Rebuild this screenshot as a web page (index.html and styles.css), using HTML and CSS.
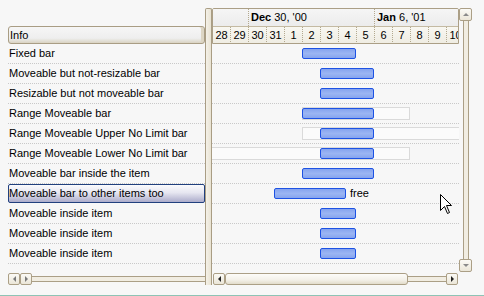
FILE: index.html
```html
<!DOCTYPE html>
<html lang="en">
<head>
<meta charset="utf-8">
<title>Gantt bars</title>
<link rel="stylesheet" href="styles.css">
</head>
<body>
<div class="frame">
  <div class="items">
    <div class="items-top"></div>
    <div class="items-head">Info</div>
    <div class="item">Fixed bar</div>
    <div class="item">Moveable but not-resizable bar</div>
    <div class="item">Resizable but not moveable bar</div>
    <div class="item">Range Moveable bar</div>
    <div class="item">Range Moveable Upper No Limit bar</div>
    <div class="item">Range Moveable Lower No Limit bar</div>
    <div class="item">Moveable bar inside the item</div>
    <div class="item selected">Moveable bar to other items too</div>
    <div class="item">Moveable inside item</div>
    <div class="item">Moveable inside item</div>
    <div class="item">Moveable inside item</div>
    <div class="hscroll">
      <span class="sbtn"><i class="arr arr-left dim"></i></span>
      <span class="sbtn"><i class="arr arr-right dim"></i></span>
      <span class="track"></span>
    </div>
  </div>

  <div class="splitter"></div>

  <div class="chart">
    <div class="chart-head">
      <div class="weeks">
        <div class="week lead"></div>
        <div class="week"><b>Dec</b> 30, '00</div>
        <div class="week"><b>Jan</b> 6, '01</div>
      </div>
      <div class="days">
        <div class="day">28</div><div class="day">29</div><div class="day">30</div><div class="day">31</div>
        <div class="day">1</div><div class="day">2</div><div class="day">3</div><div class="day">4</div>
        <div class="day">5</div><div class="day">6</div><div class="day">7</div><div class="day">8</div>
        <div class="day">9</div><div class="day">10</div>
      </div>
    </div>
    <div class="lane"><span class="bar" style="left:90px;width:54px"></span></div>
    <div class="lane"><span class="bar" style="left:108px;width:54px"></span></div>
    <div class="lane"><span class="bar" style="left:108px;width:54px"></span></div>
    <div class="lane"><span class="range" style="left:90px;width:108px"></span><span class="bar" style="left:90px;width:72px"></span></div>
    <div class="lane"><span class="range open-end" style="left:90px;width:160px"></span><span class="bar" style="left:108px;width:54px"></span></div>
    <div class="lane"><span class="range open-start" style="left:0;width:198px"></span><span class="bar" style="left:108px;width:54px"></span></div>
    <div class="lane"><span class="bar" style="left:90px;width:72px"></span></div>
    <div class="lane"><span class="bar" style="left:62px;width:72px"></span><span class="note" style="left:138px">free</span></div>
    <div class="lane"><span class="bar" style="left:108px;width:36px"></span></div>
    <div class="lane"><span class="bar" style="left:108px;width:36px"></span></div>
    <div class="lane"><span class="bar" style="left:108px;width:36px"></span></div>
    <div class="hscroll chart-scroll">
      <span class="sbtn"><i class="arr arr-left"></i></span>
      <span class="thumb"></span>
      <span class="track"></span>
      <span class="sbtn"><i class="arr arr-right"></i></span>
    </div>
  </div>

  <div class="vscroll">
    <span class="sbtn"><i class="arr arr-up dim"></i></span>
    <span class="vtrack"></span>
    <span class="sbtn"><i class="arr arr-down dim"></i></span>
  </div>

  <svg class="pointer" width="13" height="21" viewBox="0 0 13 21">
    <path d="M0.5 0.5 L0.5 16.5 L4.5 12.5 L7.5 19.5 L9.5 18.5 L6.5 11.5 L11.5 11.5 Z" fill="#fff" stroke="#000" stroke-width="1"/>
  </svg>
</div>
<div class="edge"></div>
</body>
</html>
```

FILE: styles.css
```css
html, body {
  margin: 0;
  padding: 0;
}

body {
  width: 484px;
  height: 296px;
  overflow: hidden;
  background: #f7f7f7;
  font-family: "Liberation Sans", Arial, sans-serif;
  font-size: 11px;
  color: #000;
}

.frame {
  position: relative;
  display: flex;
  align-items: flex-start;
  height: 295px;
  padding: 8px 0 0 8px;
  box-sizing: border-box;
}

.edge {
  height: 1px;
  background: #8ec3b5;
}

/* left item list */

.items {
  width: 197px;
  display: flex;
  flex-direction: column;
}

.items-top {
  height: 18px;
}

.items-head {
  height: 18px;
  box-sizing: border-box;
  border: 1px solid #a99d84;
  border-radius: 3px;
  background: linear-gradient(#f6f6f6, #eeeeee 70%, #d9d3c2);
  padding-left: 1px;
  line-height: 16px;
  box-shadow: inset -3px 0 0 #ddd6c4;
}

.item {
  height: 20px;
  box-sizing: border-box;
  border-bottom: 1px dotted #c9c9c9;
  padding-left: 1px;
  line-height: 19px;
  white-space: nowrap;
}

.item.selected {
  border: 1px solid #21407e;
  border-radius: 2px;
  height: 19px;
  margin-bottom: 1px;
  padding-left: 0;
  line-height: 17px;
  background: linear-gradient(#fbfbfd, #e6e6f0 45%, #acaccb);
}

/* scrollbars */

.hscroll {
  display: flex;
  align-items: center;
  height: 12px;
  margin-top: 9px;
}

.sbtn {
  width: 12px;
  height: 12px;
  box-sizing: border-box;
  flex: none;
  display: flex;
  align-items: center;
  justify-content: center;
  border: 1px solid #ab9f86;
  border-radius: 2px;
  background: linear-gradient(#fbfaf6, #ebe6d8);
}

.track {
  flex: 1;
  height: 6px;
  box-sizing: border-box;
  border-top: 1px solid #ab9f86;
  border-bottom: 1px solid #ab9f86;
  background: #f1ede2;
}

.thumb {
  width: 183px;
  height: 12px;
  box-sizing: border-box;
  border: 1px solid #ab9f86;
  border-radius: 3px;
  background: linear-gradient(#fdfcf9, #f3f0e8 60%, #e2dccb);
}

.arr {
  width: 0;
  height: 0;
  border: 3px solid transparent;
}

.arr-left { border-right: 3px solid #222; border-left-width: 0; }
.arr-right { border-left: 3px solid #222; border-right-width: 0; }
.arr-up { border-bottom: 3px solid #222; border-top-width: 0; }
.arr-down { border-top: 3px solid #222; border-bottom-width: 0; }
.arr.dim { border-color: transparent; }
.arr-left.dim { border-right-color: #7a7a7a; }
.arr-right.dim { border-left-color: #7a7a7a; }
.arr-up.dim { border-bottom-color: #8a8a8a; }
.arr-down.dim { border-top-color: #8a8a8a; }

.splitter {
  width: 7px;
  height: 277px;
  box-sizing: border-box;
  border: 1px solid #a99d84;
  border-bottom: 0;
  border-radius: 2px 2px 0 0;
  background: linear-gradient(90deg, #f4f1e8, #e9e3d3);
}

/* chart */

.chart {
  width: 247px;
  display: flex;
  flex-direction: column;
}

.chart-head {
  height: 36px;
  box-sizing: border-box;
  border: 1px solid #ab9f86;
  border-radius: 2px 2px 0 0;
  overflow: hidden;
}

.weeks {
  display: flex;
  height: 17px;
  border-bottom: 1px solid #c4baa2;
  background: linear-gradient(#f5f5f5, #ececec);
  white-space: nowrap;
}

.week {
  width: 126px;
  flex: none;
  box-sizing: border-box;
  padding-left: 2px;
  line-height: 17px;
  border-left: 1px dotted #b3a98f;
}

.week.lead {
  width: 35px;
  border-left: 0;
}

.days {
  display: flex;
  height: 17px;
  background: linear-gradient(#f8f7f1, #efece2);
}

.day {
  width: 18px;
  flex: none;
  box-sizing: border-box;
  border-right: 1px dotted #b3a98f;
  text-align: center;
  line-height: 17px;
}

.lane {
  position: relative;
  height: 20px;
  box-sizing: border-box;
  border-bottom: 1px dotted #c9c9c9;
  overflow: hidden;
}

.bar {
  position: absolute;
  top: 4px;
  height: 11px;
  box-sizing: border-box;
  border: 1px solid #1d52e4;
  border-radius: 2px;
  background: linear-gradient(#86a4ee, #9bb5f3 50%, #86a4ee);
}

.range {
  position: absolute;
  top: 3px;
  height: 13px;
  box-sizing: border-box;
  border: 1px solid #dadada;
  background: #fbfbfb;
}

.range.open-end { border-right: 0; }
.range.open-start { border-left: 0; }

.note {
  position: absolute;
  top: 0;
  line-height: 19px;
}

.chart-scroll {
  margin-left: 1px;
  width: 245px;
}

.vscroll {
  width: 13px;
  height: 264px;
  display: flex;
  flex-direction: column;
  align-items: center;
}

.vscroll .sbtn {
  width: 13px;
  height: 13px;
}

.vtrack {
  flex: 1;
  width: 6px;
  box-sizing: border-box;
  border-left: 1px solid #ab9f86;
  border-right: 1px solid #ab9f86;
  background: #f1ede2;
}

.pointer {
  position: absolute;
  left: 440px;
  top: 194px;
}
```
